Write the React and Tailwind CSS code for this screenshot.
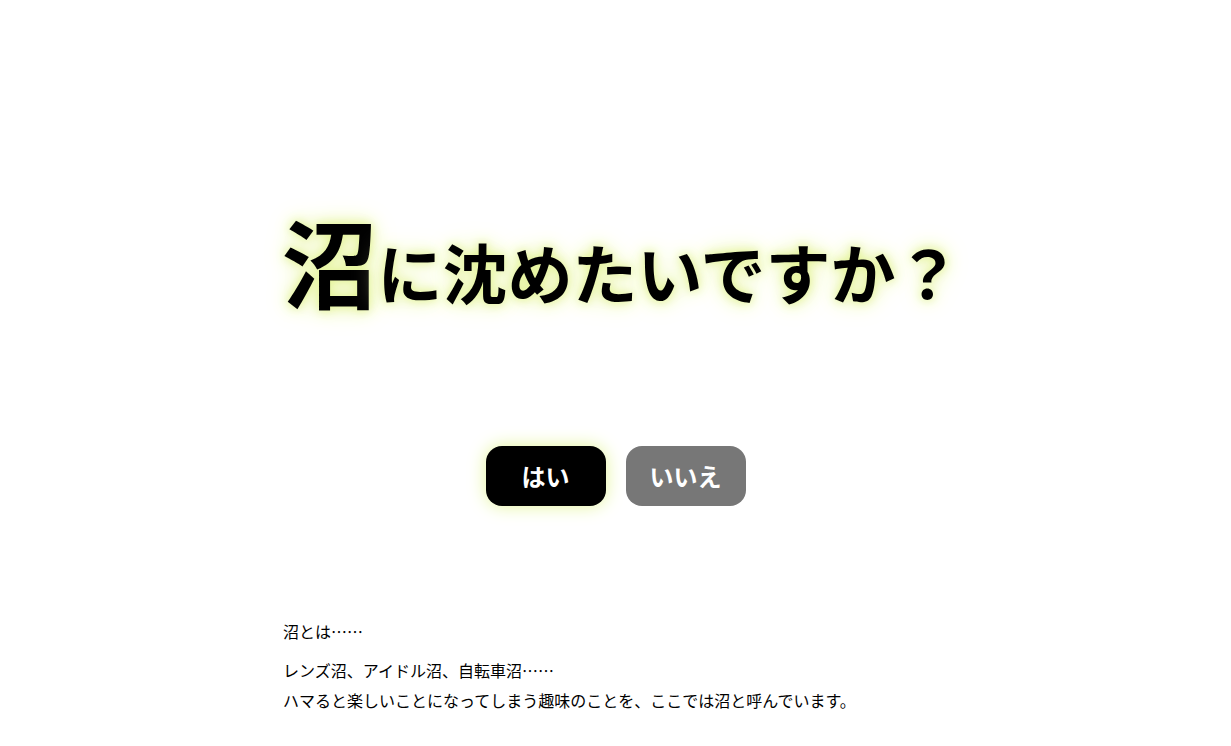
import React from 'react';

// 沼に沈めたいですか？ — landing question page

const glow = '0 0 10px #e2f393, 0 0 18px #ebf6ac, 0 0 28px #f2f9c8';

const App = () => {
  return (
    <div
      className="min-h-screen w-full bg-white text-black"
      style={{ fontFamily: '"Noto Sans CJK JP", "Noto Sans", sans-serif' }}
    >
      <div className="flex flex-col items-center pt-[212px]">
        <h1
          className="flex items-end pl-[11px] font-bold leading-none whitespace-nowrap"
          style={{ textShadow: glow }}
        >
          <span className="text-[96px] leading-none">沼</span>
          <span className="text-[65px] leading-none pb-[4px]">に沈めたいですか？</span>
        </h1>

        <div className="mt-[138px] flex gap-[20px]">
          <button className="w-[120px] h-[60px] rounded-[16px] bg-black text-white text-[24px] font-bold shadow-[0_0_18px_#e4f59a]">
            はい
          </button>
          <button className="w-[120px] h-[60px] rounded-[16px] bg-[#777777] text-white text-[24px] font-bold">
            いいえ
          </button>
        </div>
      </div>

      <div className="w-[665px] mx-auto mt-[110px] text-[16px] leading-[30px]">
        <p className="mb-[9px]">沼とは……</p>
        <p>
          レンズ沼、アイドル沼、自転車沼……
          <br />
          ハマると楽しいことになってしまう趣味のことを、ここでは沼と呼んでいます。
        </p>
      </div>
    </div>
  );
};

export default App;
